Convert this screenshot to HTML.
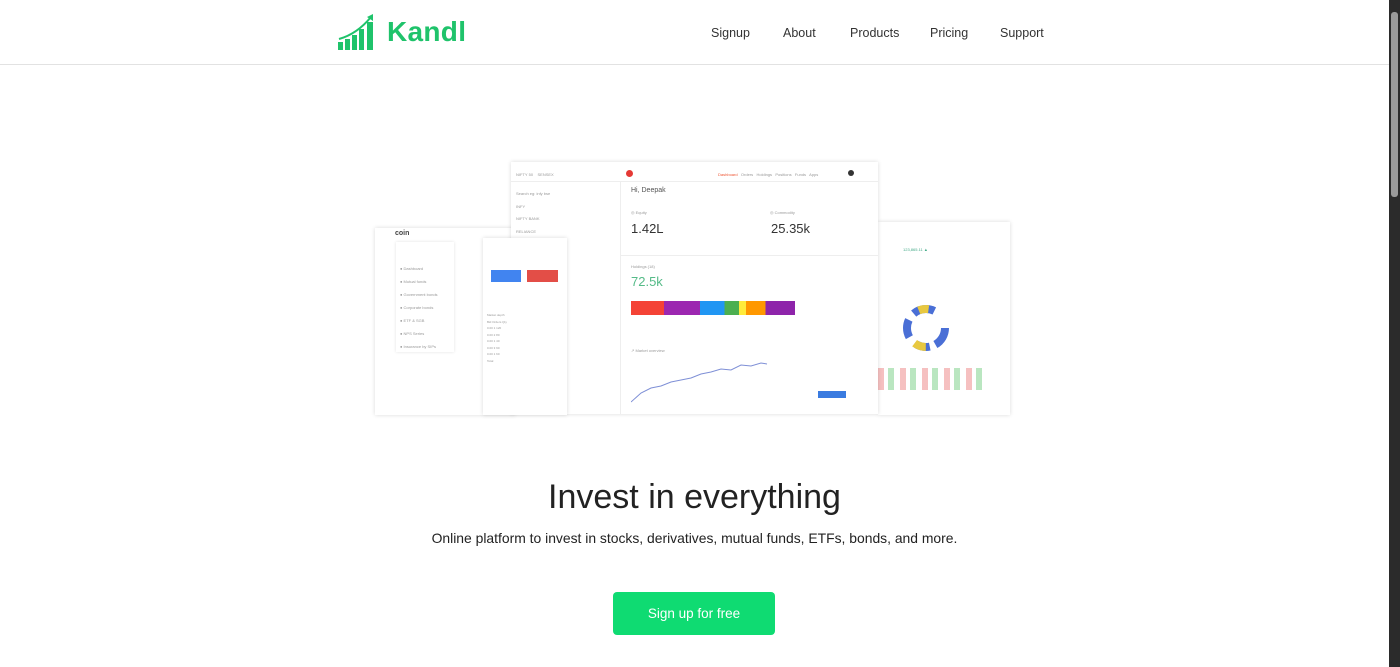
<!DOCTYPE html>
<html><head><meta charset="utf-8"><style>
*{margin:0;padding:0;box-sizing:border-box}
body{width:1400px;height:667px;overflow:hidden;background:#fff;font-family:"Liberation Sans",sans-serif;position:relative;color:#222}
.hdr{position:absolute;left:0;top:0;width:1389px;height:65px;border-bottom:1px solid #e2e2e2}
.logo{position:absolute;left:337px;top:12px}
.logo span{position:absolute;left:50px;top:4px;font-size:28px;font-weight:bold;color:#1fc36b;letter-spacing:0.3px}
.nav a{position:absolute;top:26px;font-size:12.5px;color:#333;text-decoration:none}
.sb{position:absolute;left:1389px;top:0;width:11px;height:667px;background:#2b2b2b}
.sb div{position:absolute;left:2px;top:12px;width:7px;height:185px;background:#9a9a9a;border-radius:3px}
.p{position:absolute;background:#fff;box-shadow:0 0 4px rgba(0,0,0,.15)}
.t{position:absolute;font-size:4px;color:#999}
h1{position:absolute;left:0;width:1389px;top:478px;text-align:center;font-weight:normal;font-size:34px;color:#222}
.sub{position:absolute;left:0;width:1389px;top:530px;text-align:center;font-size:13.9px;color:#222}
.btn{position:absolute;left:613px;top:592px;width:162px;height:43px;background:#0fdb72;border-radius:4px;color:#fff;font-size:13.5px;text-align:center;line-height:43px}
.ln{position:absolute;height:1px;background:#eee}
</style></head><body>
<div class="hdr">
<div class="logo"><svg width="42" height="40" viewBox="0 0 42 40"><rect x="1" y="30" width="5" height="8" fill="#1fc36b"/><rect x="8" y="27" width="5" height="11" fill="#1fc36b"/><rect x="15" y="23" width="5" height="15" fill="#1fc36b"/><rect x="22" y="17" width="5" height="21" fill="#1fc36b"/><rect x="30" y="10" width="6" height="28" fill="#1fc36b"/><path d="M2 27 Q20 22 34 5" stroke="#1fc36b" stroke-width="2" fill="none"/><path d="M30 5 L36 2 L36 9Z" fill="#1fc36b"/></svg><span>Kandl</span></div>
<div class="nav"><a style="left:711px">Signup</a><a style="left:783px">About</a><a style="left:850px">Products</a><a style="left:930px">Pricing</a><a style="left:1000px">Support</a></div>
</div>
<div class="sb"><div></div></div>

<div class="p" style="left:375px;top:228px;width:140px;height:187px"></div>
<div class="t" style="left:395px;top:230px;font-size:7px;color:#444;font-weight:bold">coin</div>
<div class="p" style="left:396px;top:242px;width:58px;height:110px;box-shadow:0 0 3px rgba(0,0,0,.12)"></div>
<div class="t" style="left:400px;top:262px;line-height:13px">● Dashboard<br>● Mutual funds<br>● Government bonds<br>● Corporate bonds<br>● ETF &amp; SGB<br>● NPS Series<br>● Insurance by SIPs</div>
<div class="p" style="left:878px;top:222px;width:132px;height:193px"></div>
<div class="t" style="left:903px;top:247px;color:#4a8">123,865.11 ▲</div>
<svg style="position:absolute;left:902px;top:303px" width="48" height="50"><circle cx="24" cy="25" r="19" fill="none" stroke-width="8" stroke="#4a6fd6" stroke-dasharray="20 6 14 10 18 8 22 22"/><circle cx="24" cy="25" r="19" fill="none" stroke-width="8" stroke="#e8c840" stroke-dasharray="0 30 12 40 10 120"/></svg>
<div style="position:absolute;left:878px;top:368px;width:105px;height:22px;background:repeating-linear-gradient(90deg,#f3b0b0 0 6px,#fff 6px 10px,#a8e0b0 10px 16px,#fff 16px 22px);opacity:.8"></div>
<div class="p" style="left:511px;top:162px;width:367px;height:252px"></div>
<div class="ln" style="left:511px;top:181px;width:367px"></div>
<div style="position:absolute;left:620px;top:181px;width:1px;height:233px;background:#eee"></div>
<div class="t" style="left:516px;top:172px">NIFTY 50 &nbsp;&nbsp; SENSEX</div>
<div style="position:absolute;left:626px;top:170px;width:7px;height:7px;border-radius:50%;background:#e53935"></div>
<div class="t" style="left:718px;top:172px"><span style="color:#e53">Dashboard</span> &nbsp; Orders &nbsp; Holdings &nbsp; Positions &nbsp; Funds &nbsp; Apps</div>
<div style="position:absolute;left:848px;top:170px;width:6px;height:6px;border-radius:50%;background:#333"></div>
<div class="t" style="left:516px;top:188px;line-height:12.7px;width:100px">Search eg: infy bse<br>INFY<br>NIFTY BANK<br>RELIANCE<br>HDFCBANK<br>TCS<br>ITC<br>SBIN<br>WIPRO<br>LT<br>AXIS<br>ONGC<br>BPCL<br>MARUTI</div>
<div class="t" style="left:631px;top:187px;font-size:7px;color:#555">Hi, Deepak</div>
<div class="t" style="left:631px;top:210px">◎ Equity</div>
<div class="t" style="left:770px;top:210px">◎ Commodity</div>
<div class="t" style="left:631px;top:221px;font-size:13px;color:#333">1.42L</div>
<div class="t" style="left:771px;top:221px;font-size:13px;color:#333">25.35k</div>
<div class="ln" style="left:621px;top:255px;width:257px"></div>
<div class="t" style="left:631px;top:264px">Holdings (18)</div>
<div class="t" style="left:631px;top:274px;font-size:13px;color:#5b8">72.5k</div>
<div style="position:absolute;left:631px;top:301px;width:164px;height:14px;background:linear-gradient(90deg,#f44336 0 20%,#9c27b0 20% 42%,#2196f3 42% 57%,#4caf50 57% 66%,#ffeb3b 66% 70%,#ff9800 70% 82%,#8e24aa 82% 100%)"></div>
<div class="t" style="left:631px;top:348px">↗ Market overview</div>
<svg style="position:absolute;left:631px;top:360px" width="140" height="45"><polyline points="0,42 10,33 20,28 30,26 40,22 50,20 60,18 70,14 80,12 90,9 100,10 110,5 120,6 130,3 136,4" fill="none" stroke="#7e8fd6" stroke-width="1"/></svg>
<div style="position:absolute;left:818px;top:391px;width:28px;height:7px;background:#3a7be0"></div>
<div class="p" style="left:483px;top:238px;width:84px;height:177px"></div>
<div style="position:absolute;left:491px;top:270px;width:30px;height:12px;background:#4184f0"></div>
<div style="position:absolute;left:527px;top:270px;width:31px;height:12px;background:#e34e47"></div>
<div class="t" style="left:487px;top:312px;line-height:6.5px;font-size:3px">Market depth<br>Bid Orders Qty<br>0.00 1 120<br>0.00 2 80<br>0.00 1 40<br>0.00 3 90<br>0.00 1 60<br>Total</div>

<h1>Invest in everything</h1>
<div class="sub">Online platform to invest in stocks, derivatives, mutual funds, ETFs, bonds, and more.</div>
<div class="btn">Sign up for free</div>
</body></html>
